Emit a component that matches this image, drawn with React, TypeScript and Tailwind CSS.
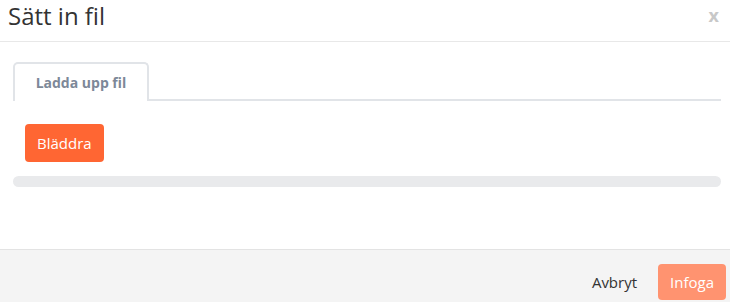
import React from 'react';

export default function App() {
    return (
        <div className="w-[730px] h-[302px] bg-white flex flex-col" style={{ fontFamily: '"Open Sans", sans-serif' }}>
            {/* Header */}
            <div className="h-[42px] border-b border-[#e8e8e8] flex items-start justify-between pl-[8px] pr-[11px]">
                <h1 className="text-[24px] leading-[32px] text-[#333] font-normal">Sätt in fil</h1>
                <button className="text-[18px] font-bold text-[#c8c8c8] leading-[30px]">x</button>
            </div>

            {/* Body */}
            <div className="flex-1 px-[13px] pt-[20px] pr-[9px]">
                <div className="border-b-2 border-[#e1e4e8] flex">
                    <div className="w-[136px] h-[39px] -mb-[2px] border-2 border-b-0 border-[#e1e4e8] rounded-t-[5px] bg-white flex items-center justify-center text-[14px] font-bold text-[#7d8898]">
                        Ladda upp fil
                    </div>
                </div>
                <div className="pl-[12px] pt-[23px]">
                    <button className="h-[38px] px-[12px] rounded-[4px] bg-[#ff6633] text-white text-[15px]">Bläddra</button>
                </div>
                <div className="mt-[14px] h-[11px] rounded-full bg-[#e9eaec]" />
            </div>

            {/* Footer */}
            <div className="h-[53px] bg-[#f4f4f4] border-t border-[#e3e3e3] flex items-center justify-end gap-[21px] pr-[4px] pt-[12px]">
                <button className="text-[15px] text-[#333]">Avbryt</button>
                <button className="h-[36px] px-[12px] rounded-[4px] bg-[#ff9370] text-white text-[15px]">Infoga</button>
            </div>
        </div>
    );
}
